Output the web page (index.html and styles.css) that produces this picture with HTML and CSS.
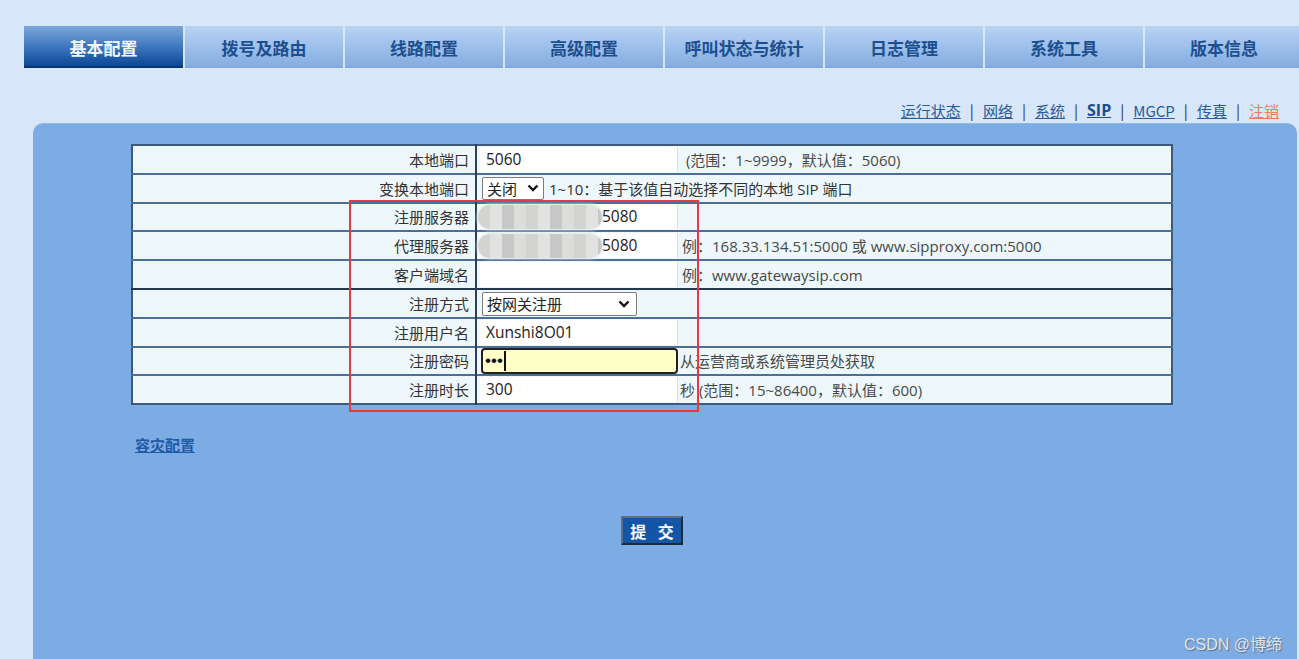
FILE: index.html
```html
<!DOCTYPE html>
<html lang="zh">
<head>
<meta charset="utf-8">
<title>基本配置 - SIP</title>
<link rel="stylesheet" href="styles.css">
</head>
<body>
<div class="top">
  <nav class="tabs">
    <div class="tab active">基本配置</div>
    <div class="tab">拨号及路由</div>
    <div class="tab">线路配置</div>
    <div class="tab">高级配置</div>
    <div class="tab">呼叫状态与统计</div>
    <div class="tab">日志管理</div>
    <div class="tab">系统工具</div>
    <div class="tab">版本信息</div>
  </nav>
  <div class="sublinks">
    <a class="lnk">运行状态</a><span class="sep">|</span>
    <a class="lnk">网络</a><span class="sep">|</span>
    <a class="lnk">系统</a><span class="sep">|</span>
    <a class="lnk cur">SIP</a><span class="sep">|</span>
    <a class="lnk">MGCP</a><span class="sep">|</span>
    <a class="lnk">传真</a><span class="sep">|</span>
    <a class="lnk red">注销</a>
  </div>
</div>
<main class="panel">
  <div class="tblwrap">
    <table class="cfg">
      <tr>
        <td class="lbl">本地端口</td>
        <td class="val"><div class="inp">5060</div></td>
        <td class="hint">&nbsp;(范围：1~9999，默认值：5060)</td>
      </tr>
      <tr>
        <td class="lbl">变换本地端口</td>
        <td class="val" colspan="2"><div class="row2"><span class="sel sel-s">关闭<svg class="chev" viewBox="0 0 12 8" width="12" height="8"><path d="M1.5 1.5 L6 6 L10.5 1.5" fill="none" stroke="#111" stroke-width="2.4"/></svg></span><span class="hint2">1~10：基于该值自动选择不同的本地 SIP 端口</span></div></td>
      </tr>
      <tr>
        <td class="lbl">注册服务器</td>
        <td class="val"><div class="inp blurinp"><span class="blur"></span>5080</div></td>
        <td class="hint"></td>
      </tr>
      <tr>
        <td class="lbl">代理服务器</td>
        <td class="val"><div class="inp blurinp"><span class="blur"></span>5080</div></td>
        <td class="hint">例：168.33.134.51:5000 或 www.sipproxy.com:5000</td>
      </tr>
      <tr class="thick">
        <td class="lbl">客户端域名</td>
        <td class="val"><div class="inp"></div></td>
        <td class="hint">例：www.gatewaysip.com</td>
      </tr>
      <tr>
        <td class="lbl">注册方式</td>
        <td class="val"><span class="sel sel-l">按网关注册<svg class="chev" viewBox="0 0 12 8" width="12" height="8"><path d="M1.5 1.5 L6 6 L10.5 1.5" fill="none" stroke="#111" stroke-width="2.4"/></svg></span></td>
        <td class="hint"></td>
      </tr>
      <tr>
        <td class="lbl">注册用户名</td>
        <td class="val"><div class="inp">Xunshi8O01</div></td>
        <td class="hint"></td>
      </tr>
      <tr>
        <td class="lbl">注册密码</td>
        <td class="val"><div class="pwd"><span class="dots">•••</span><span class="caret"></span></div></td>
        <td class="hint tight">从运营商或系统管理员处获取</td>
      </tr>
      <tr>
        <td class="lbl">注册时长</td>
        <td class="val"><div class="inp">300</div></td>
        <td class="hint tight">秒 (范围：15~86400，默认值：600)</td>
      </tr>
    </table>
    <div class="redbox"></div>
  </div>
  <a class="dr">容灾配置</a>
  <div class="btnrow"><button class="submit">提 交</button></div>
  <div class="wm">CSDN @博缔</div>
</main>
</body>
</html>
```

FILE: styles.css
```css
html, body {
  margin: 0;
  padding: 0;
}
body {
  background: #d8e6f9;
  font-family: "Open Sans", "Noto Sans CJK SC", sans-serif;
  width: 1299px;
  height: 659px;
  overflow: hidden;
}
.top {
  padding-top: 26px;
}
.tabs {
  display: flex;
  margin-left: 24px;
  gap: 2px;
  height: 42px;
}
.tab {
  width: 158px;
  flex: none;
  height: 42px;
  line-height: 43px;
  text-align: center;
  font-family: "Noto Sans CJK SC", sans-serif;
  font-size: 17px;
  font-weight: bold;
  color: #1d4f8f;
  background: linear-gradient(#b9d3f3, #98bce9 60%, #86ade0);
  border-bottom: 1px solid #7ea6da;
  box-sizing: border-box;
}
.tab.active {
  width: 159px;
  color: #f4f8ff;
  background: linear-gradient(#7ca6da, #3b74bb 55%, #0c4796);
  border-bottom: 2px solid #0a3670;
}
.sublinks {
  display: flex;
  justify-content: flex-end;
  align-items: center;
  gap: 9px;
  margin-top: 31px;
  padding-right: 20px;
  height: 22px;
  font-family: "Noto Sans CJK SC", sans-serif;
  font-size: 15px;
  color: #2d3b55;
}
.lnk {
  color: #2a5b9a;
  text-decoration: underline;
}
.lnk.cur {
  font-family: "Open Sans", sans-serif;
  font-weight: bold;
  color: #1a4d8d;
  font-size: 16px;
}
.lnk.red {
  color: #ef7a6c;
}
.sep {
  color: #333;
}
.panel {
  display: block;
  margin: 2px 2px 0 33px;
  height: 540px;
  background: #7dabe3;
  border-radius: 10px 10px 0 0;
  border-top: 1px solid #8fb6e4;
  padding-top: 20px;
  position: relative;
  box-sizing: border-box;
}
.tblwrap {
  position: relative;
  margin-left: 98px;
  width: 1042px;
}
.cfg {
  width: 1042px;
  border-collapse: collapse;
  border: 2px solid #3d5a7e;
  background: #eef8fc;
  font-size: 15px;
  color: #333;
}
.cfg td {
  height: 28.8px;
  padding: 0;
  border-top: 2px solid #4c6f98;
  box-sizing: border-box;
  vertical-align: middle;
}
.cfg tr:first-child td {
  border-top: 0;
}
.cfg tr.thick + tr td {
  border-top: 2px solid #26384f;
}
.lbl {
  width: 344px;
  text-align: right;
  padding-right: 6px !important;
  border-right: 2px solid #2b3f5c;
  color: #333;
  font-family: "Noto Sans CJK SC", sans-serif;
}
.val {
  width: 202px;
  padding-left: 3px !important;
}
.inp {
  background: #fff;
  height: 25px;
  line-height: 25px;
  padding-left: 6px;
  box-sizing: border-box;
  color: #222;
  font-size: 15.5px;
  border-right: 1px solid #d8e2ea;
}
.blurinp {
  display: flex;
  align-items: center;
  padding-left: 0;
  margin-left: -2px;
}
.blur {
  display: inline-block;
  width: 124px;
  height: 24px;
  border-radius: 12px;
  background: repeating-linear-gradient(90deg, #d3d3d2 0 12px, #e2e2e0 12px 24px, #c8c8c8 24px 36px, #dcdcda 36px 48px);
  box-shadow: 0 0 3px 1px #dfe4e8;
}
.hint {
  padding-left: 4px !important;
  color: #484848;
}
.hint.tight {
  padding-left: 2px !important;
}
.row2 {
  display: flex;
  align-items: center;
  gap: 5px;
}
.hint2 {
  color: #333;
}
.sel {
  display: inline-flex;
  align-items: center;
  justify-content: space-between;
  background: #fff;
  border: 1px solid #7b7b7b;
  border-radius: 2px;
  height: 23px;
  box-sizing: border-box;
  padding: 0 4px;
  color: #222;
  font-family: "Noto Sans CJK SC", sans-serif;
}
.sel-s {
  width: 62px;
  margin-left: 2px;
}
.sel-l {
  width: 155px;
  height: 24px;
  margin-left: 2px;
  margin-top: 1px;
  padding-right: 6px;
}
.pwd {
  display: flex;
  align-items: center;
  height: 26px;
  background: #ffffc8;
  border: 2px solid #222;
  border-radius: 4px;
  box-sizing: border-box;
  padding-left: 2px;
  margin-left: 1px;
}
.dots {
  font-family: "Liberation Sans", sans-serif;
  font-size: 17px;
  letter-spacing: 0;
  color: #111;
  line-height: 1;
}
.caret {
  width: 2px;
  height: 20px;
  background: #111;
  margin-left: 1px;
}
.redbox {
  position: absolute;
  left: 218px;
  top: 56px;
  width: 350px;
  height: 212px;
  border: 2px solid #e53b3b;
  box-sizing: border-box;
  pointer-events: none;
}
.dr {
  display: inline-block;
  margin-left: 102px;
  margin-top: 29px;
  font-family: "Noto Sans CJK SC", sans-serif;
  font-size: 15px;
  color: #1f5aa6;
  text-decoration: underline;
  font-weight: bold;
}
.btnrow {
  display: flex;
  justify-content: flex-start;
  padding-left: 588px;
  margin-top: 60px;
}
.submit {
  width: 62px;
  height: 29px;
  background: #1356a6;
  color: #fff;
  font-family: "Noto Sans CJK SC", sans-serif;
  font-weight: bold;
  font-size: 16px;
  letter-spacing: 4px;
  padding: 0 0 0 4px;
  border: 2px solid #5d6f86;
  border-bottom-color: #1d2a3a;
  border-right-color: #1d2a3a;
}
.wm {
  position: absolute;
  right: 15px;
  bottom: 8px;
  font-family: "Liberation Sans", "Noto Sans CJK SC", sans-serif;
  font-size: 16px;
  color: #dfe6ee;
  text-shadow: 1px 1px 1px #5f6f82;
}
```
